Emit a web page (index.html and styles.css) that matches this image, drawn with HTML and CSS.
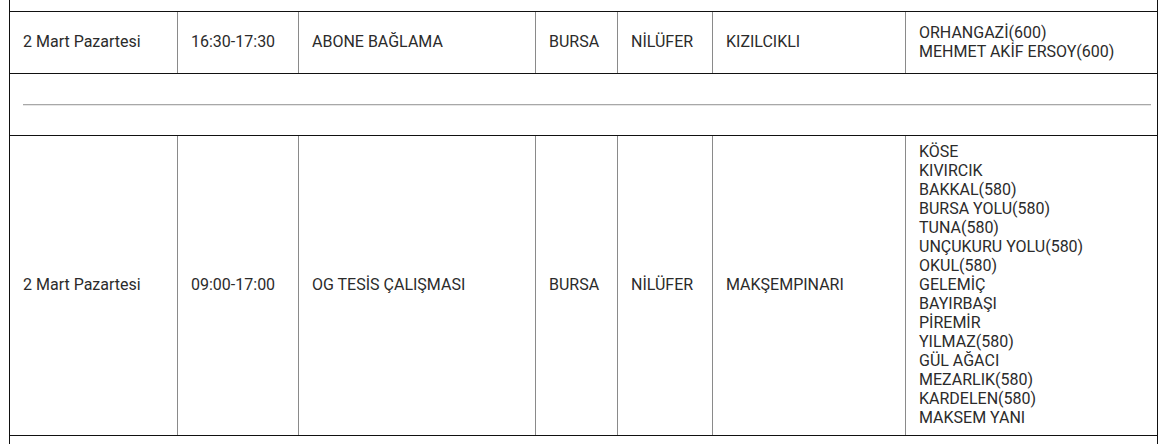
FILE: index.html
```html
<!DOCTYPE html>
<html lang="tr">
<head>
<meta charset="utf-8">
<title>Kesinti Listesi</title>
<link rel="stylesheet" href="styles.css">
</head>
<body>
<table class="outages">
  <colgroup>
    <col class="c-date">
    <col class="c-time">
    <col class="c-reason">
    <col class="c-city">
    <col class="c-district">
    <col class="c-area">
    <col class="c-streets">
  </colgroup>
  <tbody>
    <tr class="sep sep-top">
      <td colspan="7"><hr class="divider"></td>
    </tr>
    <tr class="row row-short">
      <td>2 Mart Pazartesi</td>
      <td>16:30-17:30</td>
      <td>ABONE BAĞLAMA</td>
      <td>BURSA</td>
      <td>NİLÜFER</td>
      <td>KIZILCIKLI</td>
      <td>ORHANGAZİ(600)<br>MEHMET AKİF ERSOY(600)</td>
    </tr>
    <tr class="sep">
      <td colspan="7"><hr class="divider"></td>
    </tr>
    <tr class="row">
      <td>2 Mart Pazartesi</td>
      <td>09:00-17:00</td>
      <td>OG TESİS ÇALIŞMASI</td>
      <td>BURSA</td>
      <td>NİLÜFER</td>
      <td>MAKŞEMPINARI</td>
      <td>KÖSE<br>KIVIRCIK<br>BAKKAL(580)<br>BURSA YOLU(580)<br>TUNA(580)<br>UNÇUKURU YOLU(580)<br>OKUL(580)<br>GELEMİÇ<br>BAYIRBAŞI<br>PİREMİR<br>YILMAZ(580)<br>GÜL AĞACI<br>MEZARLIK(580)<br>KARDELEN(580)<br>MAKSEM YANI</td>
    </tr>
    <tr class="sep">
      <td colspan="7"><hr class="divider"></td>
    </tr>
  </tbody>
</table>
</body>
</html>
```
FILE: styles.css
```css
html, body {
  margin: 0;
  padding: 0;
  background: #ffffff;
}

body {
  font-family: Roboto, "Liberation Sans", Arial, sans-serif;
  font-size: 16px;
  line-height: 19px;
  color: #2b2b2b;
  overflow: hidden;
}

.outages {
  border-collapse: collapse;
  table-layout: fixed;
  width: 1148px;
  margin: -50px 0 0 9px;
}

.c-date { width: 168px; }
.c-time { width: 121px; }
.c-reason { width: 237px; }
.c-city { width: 82px; }
.c-district { width: 95px; }
.c-area { width: 193px; }
.c-streets { width: 252px; }

.outages td {
  padding: 6px 13px 8px;
  vertical-align: middle;
  text-align: left;
  border-left: 1px solid #8a8a8a;
  border-right: 1px solid #8a8a8a;
  border-top: 1px solid #111111;
  border-bottom: 1px solid #111111;
}

.outages td:first-child {
  border-left: 1px solid #111111;
}

.outages td:last-child {
  border-right: 1px solid #111111;
}

.row-short td {
  height: 47px;
}

.sep td {
  height: 47px;
  padding: 7px 6px 7px 13px;
}

.sep-top td {
  border-top: none;
}

.divider {
  margin: 0;
  height: 0;
  border: none;
  border-top: 1px solid #a8a8a8;
  border-bottom: 1px solid #e6e6e6;
}
```
